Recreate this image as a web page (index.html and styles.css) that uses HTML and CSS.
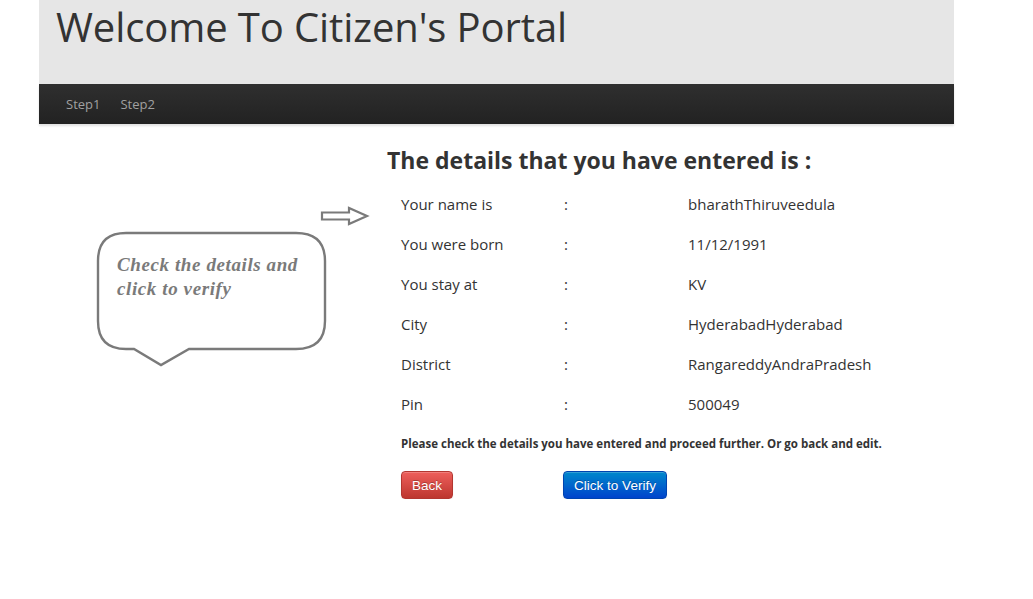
FILE: index.html
```html
<!DOCTYPE html>
<html>
<head>
<meta charset="utf-8">
<link rel="stylesheet" href="styles.css">
</head>
<body>
<div class="page">
  <header class="hero">
    <h1 class="title">Welcome To Citizen's Portal</h1>
  </header>
  <nav class="navbar">
    <a class="nav-link">Step1</a>
    <a class="nav-link">Step2</a>
  </nav>
  <main class="content">
    <aside class="side">
      <svg class="arrow" width="50" height="20" viewBox="0 0 50 20">
        <path d="M2 6.5 H29 V2 L47 10 L29 18 V13.5 H2 Z" fill="none" stroke="#7a7a7a" stroke-width="2.2" stroke-linejoin="miter"/>
      </svg>
      <div class="bubble">
        <svg class="bubble-shape" width="232" height="138" viewBox="0 0 232 138">
          <path d="M30 2 H200 Q229 2 229 30 V90 Q229 118 200 118 H93 L65 134 L38 118 H30 Q2 118 2 90 V30 Q2 2 30 2 Z" fill="#fff" stroke="#7a7a7a" stroke-width="2.4"/>
        </svg>
        <p class="bubble-text">Check the details and click to verify</p>
      </div>
    </aside>
    <section class="details">
      <h2 class="details-title">The details that you have entered is :</h2>
      <div class="rows">
        <div class="row"><span class="label">Your name is</span><span class="colon">:</span><span class="value">bharathThiruveedula</span></div>
        <div class="row"><span class="label">You were born</span><span class="colon">:</span><span class="value">11/12/1991</span></div>
        <div class="row"><span class="label">You stay at</span><span class="colon">:</span><span class="value">KV</span></div>
        <div class="row"><span class="label">City</span><span class="colon">:</span><span class="value">HyderabadHyderabad</span></div>
        <div class="row"><span class="label">District</span><span class="colon">:</span><span class="value">RangareddyAndraPradesh</span></div>
        <div class="row"><span class="label">Pin</span><span class="colon">:</span><span class="value">500049</span></div>
      </div>
      <p class="note">Please check the details you have entered and proceed further. Or go back and edit.</p>
      <div class="actions">
        <button class="btn btn-danger">Back</button>
        <button class="btn btn-primary">Click to Verify</button>
      </div>
    </section>
  </main>
</div>
</body>
</html>
```
FILE: styles.css
```css
html, body {
  margin: 0;
  padding: 0;
  background: #fff;
}
body {
  font-family: "Open Sans", "DejaVu Sans", sans-serif;
  color: #333;
}
.page {
  width: 915px;
  margin-left: 39px;
}
.hero {
  background: #e6e6e6;
  height: 84px;
  padding: 0 17px;
  box-sizing: border-box;
}
.title {
  margin: 0;
  padding-top: 0;
  font-size: 40px;
  font-weight: 400;
  line-height: 54px;
  color: #333;
  letter-spacing: -0.1px;
}
.navbar {
  height: 40px;
  background: linear-gradient(#2f2f2f, #222);
  display: flex;
  align-items: center;
  padding-left: 27px;
  gap: 20px;
  box-shadow: 0 2px 2px rgba(0,0,0,0.12);
}
.nav-link {
  color: #a0a0a0;
  font-size: 13px;
  text-decoration: none;
}
.content {
  display: flex;
}
.side {
  width: 348px;
  flex: none;
  padding-top: 82px;
}
.arrow {
  display: block;
  margin-left: 281px;
}
.bubble {
  position: relative;
  margin-left: 57px;
  margin-top: 5px;
  width: 232px;
  height: 138px;
}
.bubble-shape {
  position: absolute;
  left: 0;
  top: 0;
}
.bubble-text {
  position: relative;
  margin: 0;
  padding: 22px 18px 0 21px;
  font-family: "Liberation Serif", "DejaVu Serif", serif;
  font-style: italic;
  font-weight: 700;
  font-size: 19px;
  line-height: 24px;
  color: #7a7a7a;
  letter-spacing: 0.6px;
}
.details {
  flex: 1;
}
.details-title {
  margin: 21px 0 0;
  font-size: 23px;
  line-height: 30px;
  font-weight: 700;
  color: #333;
}
.rows {
  padding-left: 14px;
  margin-top: 18px;
}
.row {
  display: flex;
  height: 40px;
  font-size: 15px;
  line-height: 22px;
  color: #333;
}
.label {
  width: 163px;
}
.colon {
  width: 124px;
}
.note {
  margin: 3px 0 0 14px;
  font-size: 11.5px;
  font-weight: 700;
  color: #333;
}
.actions {
  display: flex;
  gap: 110px;
  margin: 20px 0 0 14px;
}
.btn {
  font-family: "Liberation Sans", Arial, sans-serif;
  font-size: 13.5px;
  height: 28px;
  padding: 0 10px;
  border-radius: 4px;
  color: #fff;
  cursor: pointer;
  text-shadow: 0 -1px 0 rgba(0,0,0,0.25);
  box-shadow: inset 0 1px 0 rgba(255,255,255,0.2), 0 1px 2px rgba(0,0,0,0.05);
}
.btn-danger {
  width: 52px;
  background: linear-gradient(#ee5f5b, #bd362f);
  border: 1px solid #b33630;
}
.btn-primary {
  width: 104px;
  background: linear-gradient(#0088cc, #0044cc);
  border: 1px solid #0044b0;
}
```
